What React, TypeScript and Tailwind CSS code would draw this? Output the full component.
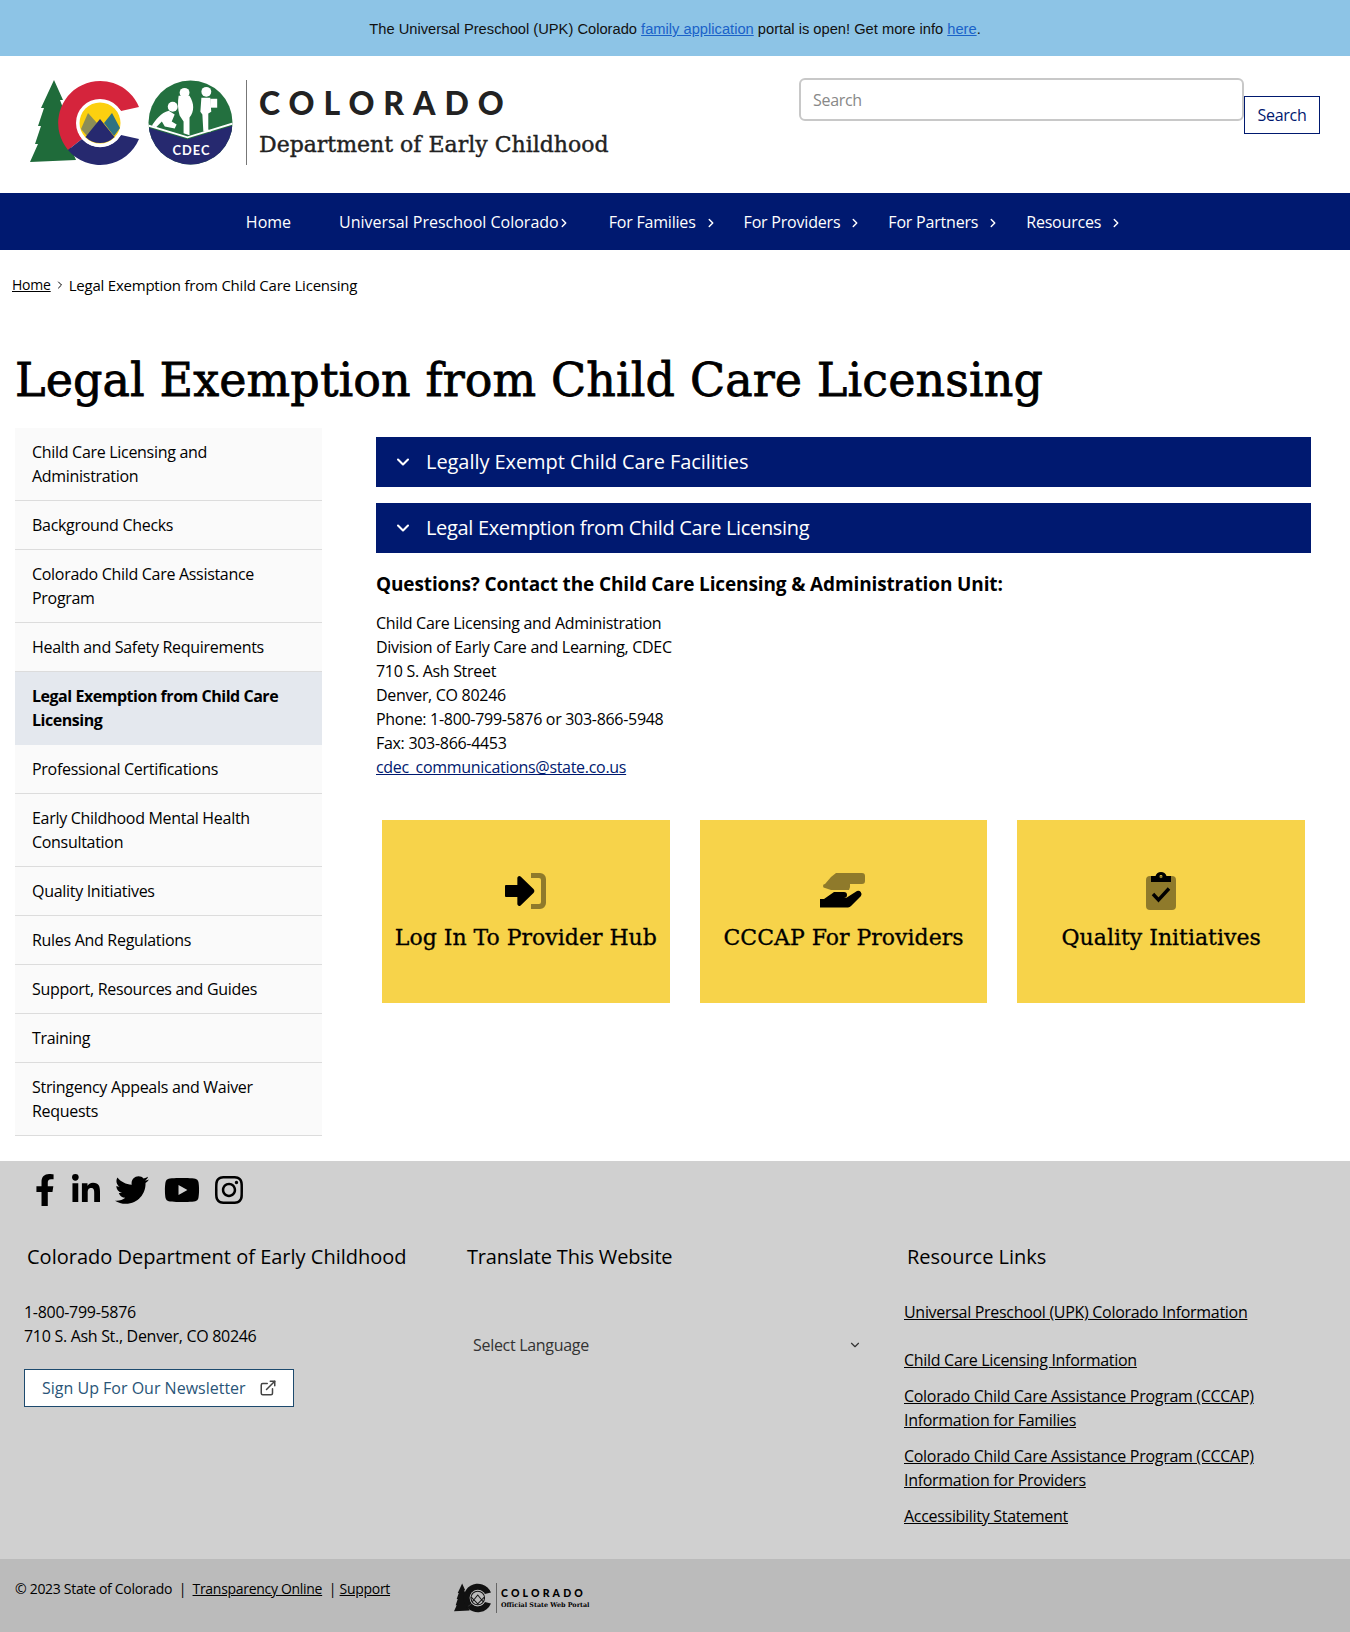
import React from 'react';
import { ChevronDown, ChevronRight, ExternalLink } from 'lucide-react';
import { FaFacebookF, FaLinkedinIn, FaTwitter, FaYoutube, FaInstagram } from 'react-icons/fa';

const sideLinks = [
  'Child Care Licensing and Administration',
  'Background Checks',
  'Colorado Child Care Assistance Program',
  'Health and Safety Requirements',
  'Legal Exemption from Child Care Licensing',
  'Professional Certifications',
  'Early Childhood Mental Health Consultation',
  'Quality Initiatives',
  'Rules And Regulations',
  'Support, Resources and Guides',
  'Training',
  'Stringency Appeals and Waiver Requests',
];

const navItems = ['Home', 'Universal Preschool Colorado', 'For Families', 'For Providers', 'For Partners', 'Resources'];

const slab = "font-['DejaVu_Serif',serif]";

const ColoradoMark: React.FC<{ mono?: boolean; className?: string }> = ({ mono, className }) => (
  <svg viewBox="0 0 112 86" className={className}>
    <path
      d="M24 0 L33 20 L30 20 L36 36 L33 36 L38 54 L35 54 L46 80 L0 82 L8 64 L5 64 L11 46 L8 46 L14 28 L11 28 Z"
      fill={mono ? '#111' : '#1f6b3a'}
    />
    <path d="M109 27 A42 42 0 1 0 38 70 L52 59 A24 24 0 1 1 91 31 Z" fill={mono ? '#111' : '#d5243c'} />
    <path d="M38 70 A42 42 0 0 0 109 59 L91 55 A24 24 0 0 1 52 59 Z" fill={mono ? '#111' : '#26296f'} />
    <circle cx="70" cy="43" r="24" fill={mono ? '#bbb' : '#fff'} />
    {mono ? (
      <>
        <circle cx="70" cy="43" r="20" fill="none" stroke="#111" strokeWidth="3" />
        <path d="M54 54 L70 34 L86 54 M50 40 L70 60 L90 40" fill="none" stroke="#111" strokeWidth="3" />
      </>
    ) : (
      <>
        <circle cx="70" cy="43" r="20.5" fill="#fcd00f" />
        <path d="M51 49 L58 33 L67 43 L58 57 Z" fill="#8c8d56" />
        <path d="M74 43 L82 33 L90 48 L84 56 Z" fill="#2f7282" />
        <path d="M55.5 57 L70 39 L84.5 57 A20.5 20.5 0 0 1 55.5 57 Z" fill="#26296f" />
      </>
    )}
  </svg>
);

const CdecMark = () => (
  <svg viewBox="0 0 86 86" className="w-[85px] h-[85px] shrink-0">
    <defs>
      <clipPath id="cdec-circle">
        <circle cx="43" cy="43" r="42.5" />
      </clipPath>
    </defs>
    <g clipPath="url(#cdec-circle)">
      <rect width="86" height="86" fill="#23703f" />
      <path d="M0 48 L40 60 L86 46 L86 86 L0 86 Z" fill="#26296f" />
      <path d="M0 46 L40 58 L86 44" fill="none" stroke="#fff" strokeWidth="2" />
    </g>
    {/* baby */}
    <circle cx="25" cy="27" r="5" fill="#fff" />
    <path d="M21 31 C13 33 8 40 4 46 L8 48 L14 42 L17 47 L27 49 L29 45 L24 42 L27 35 Z" fill="#fff" />
    {/* girl */}
    <circle cx="37" cy="13" r="5" fill="#fff" />
    <path d="M31 16 L42 16 C47 24 47 32 42 38 L42 56 L36 54 L36 42 L32 36 C30 30 30 22 31 16 Z" fill="#fff" />
    {/* boy */}
    <circle cx="59" cy="12" r="5" fill="#fff" />
    <path d="M54 18 L63 18 L64 32 L61 34 L61 50 L64 52 L56 52 L55 35 L53 32 Z" fill="#fff" />
    <rect x="63" y="19" width="7" height="9" fill="#fff" />
    <text x="44" y="76" textAnchor="middle" fontSize="13" fontWeight="700" letterSpacing="1" fill="#fff" fontFamily="Lato, sans-serif">CDEC</text>
  </svg>
);

const SignInIcon = () => (
  <svg viewBox="0 0 42 36" className="w-[42px] h-[36px]">
    <path d="M26 0 h9 a6 6 0 0 1 6 6 v24 a6 6 0 0 1 -6 6 h-9 v-5 h8 a2 2 0 0 0 2 -2 v-22 a2 2 0 0 0 -2 -2 h-8 z" fill="#000" opacity="0.42" />
    <path d="M1 12 h12 v-7 a2 2 0 0 1 3.4 -1.4 L30 16 a3 3 0 0 1 0 4 L16.4 32.4 a2 2 0 0 1 -3.4 -1.4 v-7 h-12 a1 1 0 0 1 -1 -1 v-10 a1 1 0 0 1 1 -1 z" fill="#000" transform="scale(0.95 1)" />
  </svg>
);

const HandsIcon = () => (
  <svg viewBox="0 0 46 36" className="w-[46px] h-[36px]">
    <path d="M16 0 h26 a3 3 0 0 1 3 3 v5 a3 3 0 0 1 -3 3 h-12 a9 9 0 0 1 -1 6 h-18 l-6 -2 a2 2 0 0 1 0 -4 l6 -7 z" fill="#000" opacity="0.42" />
    <path d="M0 26 h4 l10 -7 h10 a3 3 0 0 1 0 6 h-6 h8 l11 -7 a3.4 3.4 0 0 1 4 5 l-10 10 a4 4 0 0 1 -3 1.5 H0 z" fill="#000" />
  </svg>
);

const ClipboardIcon = () => (
  <svg viewBox="0 0 30 38" className="w-[30px] h-[38px]">
    <rect x="0" y="4" width="30" height="34" rx="4" fill="#000" opacity="0.42" />
    <path d="M15 0 a6 6 0 0 1 5.5 4 H25 v6 H5 V4 h4.5 A6 6 0 0 1 15 0 z M15 3 a1.6 1.6 0 1 0 0 3.2 a1.6 1.6 0 0 0 0 -3.2 z" fill="#000" fillRule="evenodd" />
    <path d="M7 22 l5.5 6 L23 16.5" fill="none" stroke="#000" strokeWidth="3.4" />
  </svg>
);

const cards = [
  { label: 'Log In To Provider Hub', icon: <SignInIcon /> },
  { label: 'CCCAP For Providers', icon: <HandsIcon /> },
  { label: 'Quality Initiatives', icon: <ClipboardIcon /> },
];

const App: React.FC = () => {
  return (
    <div className="w-[1350px] h-[1632px] overflow-hidden bg-white text-black text-base leading-6 tracking-[-0.3px] font-['Open_Sans',sans-serif]">
      {/* Alert banner */}
      <div className="h-14 bg-[#8dc4e6] flex items-center justify-center pt-[2px] text-[14.7px] tracking-normal font-['Liberation_Sans',sans-serif] text-[#111]">
        <p>
          The Universal Preschool (UPK) Colorado <a className="underline text-[#1a62c9]">family application</a> portal is open! Get more info <a className="underline text-[#1a62c9]">here</a>.
        </p>
      </div>

      {/* Header */}
      <header className="h-[137px] flex items-start justify-between">
        <div className="flex items-start pl-[30px] pt-[24px]">
          <ColoradoMark className="w-[112px] h-[86px] shrink-0" />
          <div className="ml-[6px]"><CdecMark /></div>
          <div className="w-px h-[85px] bg-[#777] ml-[13px]" />
          <div className="ml-[12px]">
            <div className="mt-[5px] text-[32px] leading-[36px] font-['Lato',sans-serif] font-black tracking-[0.28em] text-[#222]">COLORADO</div>
            <div className={`mt-[8px] text-[22px] leading-[32px] tracking-normal text-[#222] [-webkit-text-stroke:0.4px_#222] ${slab}`}>Department of Early Childhood</div>
          </div>
        </div>
        <div className="flex items-start pr-[30px] pt-[22px]">
          <input
            placeholder="Search"
            className="w-[445px] h-[43px] px-3 border-2 border-[#c8c8c8] rounded-md bg-white placeholder:text-[#888] outline-none"
          />
          <button className="mt-[18px] w-[76px] h-[38px] border border-[#00196f] text-[#00196f] bg-white">Search</button>
        </div>
      </header>

      {/* Main nav */}
      <nav className="h-[57px] bg-[#001970] flex justify-center items-center text-white pr-[3px]">
        {navItems.map((item) => {
          const upk = item === 'Universal Preschool Colorado';
          return (
            <a
              key={item}
              className={`relative pl-6 py-[12px] ${upk ? 'pr-[26px]' : 'pr-6'} ${item === 'Home' || upk ? 'tracking-normal' : 'tracking-[-0.2px]'}`}
            >
              {item}
              {item !== 'Home' && (
                <ChevronRight
                  className={`absolute top-[18px] w-[14px] h-[14px] ${upk ? 'right-[14px]' : 'right-[2px]'}`}
                  strokeWidth={2.5}
                />
              )}
            </a>
          );
        })}
      </nav>

      {/* Breadcrumb */}
      <div className="mt-[23px] pl-3 text-[15px] leading-6 tracking-[-0.22px] flex items-center">
        <a className="underline text-sm">Home</a>
        <ChevronRight className="w-3 h-3 mx-[3px]" />
        <span>Legal Exemption from Child Care Licensing</span>
      </div>

      <h1 className={`mt-[53px] pl-[15px] text-[46px] leading-[60px] tracking-[0.1px] [-webkit-text-stroke:0.8px_#000] ${slab}`}>Legal Exemption from Child Care Licensing</h1>

      <div className="mt-[18px] flex items-start pl-[15px]">
        {/* Side menu */}
        <ul className="w-[307px] shrink-0">
          {sideLinks.map((link) => {
            const active = link === 'Legal Exemption from Child Care Licensing';
            return (
              <li
                key={link}
                className={`pl-[17px] pr-4 py-3 border-b ${active ? 'bg-[#e4e8ee] font-bold tracking-[-0.47px] border-[#e4e8ee]' : 'bg-[#fafafa] border-[#dcdcdc]'}`}
              >
                {link}
              </li>
            );
          })}
        </ul>

        {/* Content */}
        <main className="ml-[54px] w-[935px] pt-[9px]">
          <div className="h-[50px] bg-[#001970] text-white text-xl tracking-[-0.06px] flex items-center pl-[17px]">
            <ChevronDown className="w-5 h-5 mr-[13px]" strokeWidth={2.5} />
            Legally Exempt Child Care Facilities
          </div>
          <div className="mt-4 h-[50px] bg-[#001970] text-white text-xl tracking-[-0.33px] flex items-center pl-[17px]">
            <ChevronDown className="w-5 h-5 mr-[13px]" strokeWidth={2.5} />
            Legal Exemption from Child Care Licensing
          </div>
          <h2 className="mt-[16px] text-[19px] tracking-[-0.13px] leading-[30px] font-bold">Questions? Contact the Child Care Licensing &amp; Administration Unit:</h2>
          <div className="mt-[12px]">
            <p>Child Care Licensing and Administration</p>
            <p>Division of Early Care and Learning, CDEC</p>
            <p>710 S. Ash Street</p>
            <p>Denver, CO 80246</p>
            <p>Phone: 1-800-799-5876 or 303-866-5948</p>
            <p>Fax: 303-866-4453</p>
            <a className="underline text-[#00196f]">cdec_communications@state.co.us</a>
          </div>
          <div className="mt-[41px] px-[6px] grid grid-cols-3 gap-[30px]">
            {cards.map((card) => (
              <a key={card.label} className="h-[183px] bg-[#f7d34a] flex flex-col items-center pt-[52px]">
                <div className="h-[38px] flex items-center justify-center">{card.icon}</div>
                <div className={`mt-[13px] text-[22px] leading-[30px] tracking-normal [-webkit-text-stroke:0.3px_#000] ${slab}`}>{card.label}</div>
              </a>
            ))}
          </div>
        </main>
      </div>

      {/* Footer */}
      <footer className="mt-[25px] h-[398px] bg-[#d0d0d0]">
        <div className="flex items-center gap-[13px] pl-[29px] h-[58px] text-[32px]">
          <FaFacebookF />
          <FaLinkedinIn className="-ml-[4px]" />
          <FaTwitter className="w-[34px] h-[34px]" />
          <FaYoutube className="w-[36px] h-[36px] ml-[2px]" />
          <FaInstagram />
        </div>
        <div className="grid grid-cols-[440px_440px_1fr] mt-[23px]">
          <div className="pl-[24px]">
            <h3 className="pl-[3px] text-xl leading-[30px] tracking-normal">Colorado Department of Early Childhood</h3>
            <p className="mt-[28px]">1-800-799-5876</p>
            <p>710 S. Ash St., Denver, CO 80246</p>
            <a className="mt-[21px] w-[270px] h-[38px] bg-white border border-[#1d4a6e] text-[#2a5578] tracking-normal flex items-center justify-between pl-[17px] pr-[16px]">
              Sign Up For Our Newsletter
              <ExternalLink className="w-[18px] h-[18px] text-[#444]" />
            </a>
          </div>
          <div className="pl-[27px]">
            <h3 className="text-xl leading-[30px] tracking-[-0.2px]">Translate This Website</h3>
            <div className="mt-[61px] w-[395px] h-[24px] pl-[6px] flex items-center justify-between text-[#333]">
              Select Language
              <ChevronDown className="w-[14px] h-[14px]" />
            </div>
          </div>
          <div className="pl-[24px]">
            <h3 className="pl-[3px] text-xl leading-[30px] tracking-normal">Resource Links</h3>
            <div className="mt-[28px] pr-[60px] underline">
              <p>Universal Preschool (UPK) Colorado Information</p>
              <p className="mt-[24px]">Child Care Licensing Information</p>
              <p className="mt-[12px]">Colorado Child Care Assistance Program (CCCAP) Information for Families</p>
              <p className="mt-[12px]">Colorado Child Care Assistance Program (CCCAP) Information for Providers</p>
              <p className="mt-[12px]">Accessibility Statement</p>
            </div>
          </div>
        </div>
      </footer>

      {/* Legal bar */}
      <div className="h-[74px] bg-[#bbbbbb] flex items-start pl-[15px] pt-[20px] text-sm">
        <span>© 2023 State of Colorado&nbsp; |&nbsp; </span>
        <a className="underline ml-[3px]">Transparency Online</a>
        <span>&nbsp; |&nbsp; </span>
        <a className="underline">Support</a>
        <div className="ml-[64px] mt-[4px] flex items-center">
          <ColoradoMark mono className="w-[38px] h-[30px]" />
          <div className="w-px h-[30px] bg-[#666] mx-[4px]" />
          <div className="leading-none">
            <div className="text-[10.5px] leading-[13px] font-['Lato',sans-serif] font-black tracking-[0.3em]">COLORADO</div>
            <div className={`text-[6.4px] leading-[10px] tracking-normal font-bold ${slab}`}>Official State Web Portal</div>
          </div>
        </div>
      </div>
    </div>
  );
};

export default App;
